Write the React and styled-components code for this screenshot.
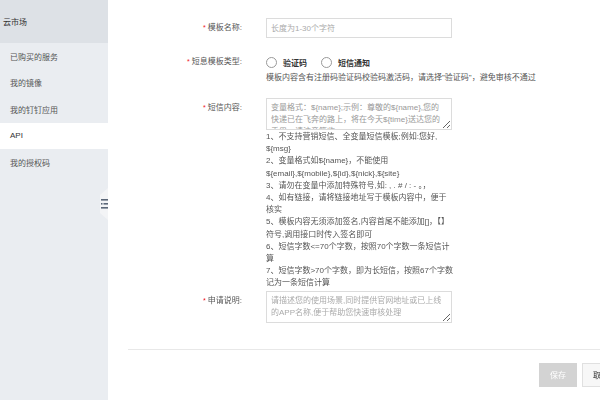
import React from 'react';
import styled, { createGlobalStyle } from 'styled-components';

const GlobalStyle = createGlobalStyle`
  html, body {
    margin: 0;
    padding: 0;
    overflow: hidden;
    background: #fff;
  }
  body {
    font-family: "Liberation Sans", "Noto Sans CJK SC", sans-serif;
    font-size: 8px;
  }
`;

const Page = styled.div`
  display: flex;
  width: 620px;
  height: 400px;
`;

const Sidebar = styled.aside`
  position: relative;
  width: 108px;
  flex-shrink: 0;
  background: #eaedf1;
`;

const SideHeader = styled.div`
  height: 43px;
  display: flex;
  align-items: center;
  padding-left: 3px;
  background: #dde1e6;
  color: #333;
  font-size: 8px;
`;

const SideItem = styled.div`
  height: 26.5px;
  display: flex;
  align-items: center;
  padding-left: 10px;
  font-size: 8px;
  color: ${(p) => (p.$active ? '#333' : '#555')};
  background: ${(p) => (p.$active ? '#fff' : 'transparent')};
`;

const CollapseHandle = styled.div`
  position: absolute;
  left: 100px;
  top: 188px;
  width: 8px;
  height: 32px;
  background: #f3f4f6;
  clip-path: polygon(0 22%, 100% 0, 100% 100%, 0 78%);
  display: flex;
  align-items: center;
  justify-content: flex-end;
`;

const Main = styled.main`
  flex: 1;
  display: flex;
  flex-direction: column;
  padding-top: 18px;
`;

const Form = styled.div`
  display: flex;
  flex-direction: column;
`;

const Row = styled.div`
  display: flex;
  align-items: flex-start;
  margin-top: ${(p) => p.$gap || 0}px;
`;

const Label = styled.div`
  width: 158px;
  padding-right: 24px;
  box-sizing: border-box;
  text-align: right;
  line-height: 20px;
  color: #555;
  font-size: 8px;
  flex-shrink: 0;
`;

const Star = styled.span`
  color: #f0141e;
  margin-right: 2px;
  font-size: 7px;
`;

const Field = styled.div`
  display: flex;
  flex-direction: column;
`;

const TextInput = styled.input`
  width: 186px;
  height: 20px;
  box-sizing: border-box;
  border: 1px solid #dcdcdc;
  padding: 0 4px;
  font-family: inherit;
  font-size: 8px;
  color: #333;
  outline: none;
  &::placeholder {
    color: #aaa;
  }
`;

const RadioGroup = styled.div`
  display: flex;
  align-items: center;
  height: 20px;
  gap: 14px;
`;

const RadioOption = styled.label`
  display: flex;
  align-items: center;
  gap: 6px;
  color: #333;
  font-weight: bold;
  font-size: 8px;
`;

const RadioCircle = styled.span`
  width: 9px;
  height: 9px;
  border: 1px solid #999;
  border-radius: 50%;
  background: #fff;
`;

const Hint = styled.div`
  line-height: 12px;
  color: #555;
  white-space: nowrap;
`;

const Area = styled.textarea`
  width: 186px;
  height: 32px;
  box-sizing: border-box;
  border: 1px solid #dcdcdc;
  padding: 3px 4px;
  font-family: inherit;
  font-size: 8px;
  line-height: 12px;
  color: #999;
  resize: vertical;
  outline: none;
  overflow-y: ${(p) => (p.$scroll ? 'scroll' : 'hidden')};
  &::placeholder {
    color: #aaa;
  }
  &::-webkit-scrollbar {
    width: 8px;
  }
  &::-webkit-scrollbar-track {
    background: #f7f7f7;
  }
  &::-webkit-scrollbar-thumb {
    background: #c6c6c6;
    border-radius: 4px;
    border: 1.5px solid #f7f7f7;
  }
`;

const HelpList = styled.div`
  margin-top: 1px;
  color: #555;
  font-size: 8px;
  line-height: 12.2px;
`;

const HelpLine = styled.div`
  white-space: nowrap;
`;

const Divider = styled.div`
  margin-top: 26px;
  margin-left: 20px;
  height: 1px;
  background: #e8e8e8;
`;

const Footer = styled.div`
  display: flex;
  justify-content: flex-end;
  gap: 5px;
  padding-top: 13px;
`;

const Button = styled.button`
  width: 38px;
  height: 24px;
  border: 1px solid ${(p) => (p.$primary ? '#d3d3d3' : '#e0e0e0')};
  background: ${(p) => (p.$primary ? '#d3d3d3' : '#f7f7f7')};
  color: ${(p) => (p.$primary ? '#fff' : '#333')};
  font-family: inherit;
  font-size: 8px;
  padding: 0;
`;

const menu = ['已购买的服务', '我的镜像', '我的钉钉应用', 'API', '我的授权码'];

const help = [
  '1、不支持营销短信、全变量短信模板;例如:您好,',
  '${msg}',
  '2、变量格式如${name}，不能使用',
  '${email},${mobile},${id},${nick},${site}',
  '3、请勿在变量中添加特殊符号,如: , . # / : - 。，',
  '4、如有链接，请将链接地址写于模板内容中，便于',
  '核实',
  '5、模板内容无须添加签名,内容首尾不能添加[]，【】',
  '符号,调用接口时传入签名即可',
  '6、短信字数<=70个字数，按照70个字数一条短信计',
  '算',
  '7、短信字数>70个字数，即为长短信，按照67个字数',
  '记为一条短信计算',
];

const App = () => {
  return (
    <>
      <GlobalStyle />
      <Page>
        <Sidebar>
          <SideHeader>云市场</SideHeader>
          {menu.map((m) => (
            <SideItem key={m} $active={m === 'API'}>
              {m}
            </SideItem>
          ))}
          <CollapseHandle>
            <svg width="7" height="10" viewBox="0 0 7 10">
              <rect x="0" y="0" width="7" height="1.6" fill="#5b6778" />
              <rect x="0" y="4" width="1.5" height="1.6" fill="#5b6778" />
              <rect x="2.5" y="4" width="4.5" height="1.6" fill="#5b6778" />
              <rect x="0" y="8" width="7" height="1.6" fill="#5b6778" />
            </svg>
          </CollapseHandle>
        </Sidebar>
        <Main>
          <Form>
            <Row>
              <Label>
                <Star>*</Star>模板名称:
              </Label>
              <TextInput placeholder="长度为1-30个字符" />
            </Row>
            <Row $gap={14}>
              <Label>
                <Star>*</Star>短息模板类型:
              </Label>
              <Field>
                <RadioGroup>
                  <RadioOption>
                    <RadioCircle />
                    验证码
                  </RadioOption>
                  <RadioOption>
                    <RadioCircle />
                    短信通知
                  </RadioOption>
                </RadioGroup>
                <Hint>模板内容含有注册码验证码校验码激活码，请选择"验证码"，避免审核不通过</Hint>
              </Field>
            </Row>
            <Row $gap={14}>
              <Label>
                <Star>*</Star>短信内容:
              </Label>
              <Field>
                <Area
                  $scroll
                  defaultValue="变量格式：${name};示例：尊敬的${name},您的快递已在飞奔的路上，将在今天${time}送达您的手里，请注意签收。"
                />
                <HelpList>
                  {help.map((h, i) => (
                    <HelpLine key={i}>{h}</HelpLine>
                  ))}
                </HelpList>
              </Field>
            </Row>
            <Row $gap={1}>
              <Label>
                <Star>*</Star>申请说明:
              </Label>
              <Area placeholder="请描述您的使用场景,同时提供官网地址或已上线的APP名称,便于帮助您快速审核处理" />
            </Row>
          </Form>
          <Divider />
          <Footer>
            <Button $primary>保存</Button>
            <Button>取消</Button>
          </Footer>
        </Main>
      </Page>
    </>
  );
};

export default App;
